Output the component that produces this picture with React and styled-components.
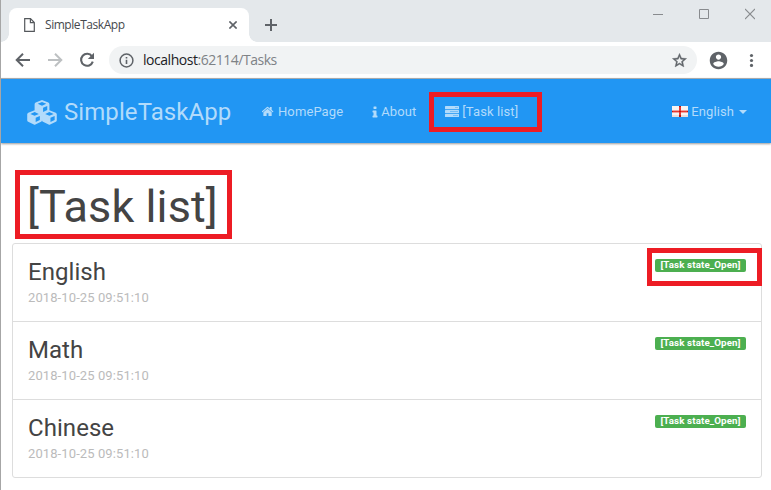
import React from 'react';
import styled, { createGlobalStyle } from 'styled-components';

const Global = createGlobalStyle`
  * { box-sizing: border-box; }
  body { margin: 0; background: #fff; font-family: Roboto, "Liberation Sans", sans-serif; }
`;

const Window = styled.div`
  width: 771px;
  height: 490px;
  overflow: hidden;
  background: #fff;
  border-left: 1px solid #a6a6a6;
`;

const TabStrip = styled.div`
  height: 42px;
  padding: 8px 0 0 8px;
  display: flex;
  background: #e4e8eb;
`;

const Tab = styled.div`
  position: relative;
  width: 240px;
  height: 34px;
  padding: 0 12px 0 15px;
  display: flex;
  align-items: center;
  background: #fff;
  border-radius: 8px 8px 0 0;
  &::before, &::after {
    content: "";
    position: absolute;
    bottom: 0;
    width: 8px;
    height: 8px;
  }
  &::before { left: -8px; background: radial-gradient(circle at 0 0, transparent 7.5px, #fff 8px); }
  &::after { right: -8px; background: radial-gradient(circle at 100% 0, transparent 7.5px, #fff 8px); }
`;

const TabTitle = styled.span`
  flex: 1;
  margin-left: 10px;
  font: 12px/16px "Open Sans", sans-serif;
  letter-spacing: -0.45px;
  color: #45494d;
`;

const NewTab = styled.div`
  width: 12px;
  height: 12px;
  margin: 11px 0 0 16px;
  display: flex;
`;

const WindowButtons = styled.div`
  margin: 0 16px 0 auto;
  display: flex;
  gap: 36px;
  height: 12px;
`;

const Toolbar = styled.div`
  height: 36px;
  display: flex;
  align-items: center;
  padding: 0 12px 0 14px;
`;

const NavButtons = styled.div`
  width: 94px;
  display: flex;
  gap: 16px;
`;

const AddressBar = styled.div`
  width: 588px;
  height: 28px;
  padding: 0 9px 0 10px;
  border-radius: 14px;
  display: flex;
  align-items: center;
  background: #f1f3f4;
`;

const Url = styled.span`
  flex: 1;
  margin-left: 9px;
  font: 14px/20px "Open Sans", sans-serif;
  letter-spacing: -0.47px;
  color: #7e8286;
  b { font-weight: 400; color: #202124; }
`;

const ToolbarEnd = styled.div`
  flex: 1;
  display: flex;
  justify-content: space-between;
  align-items: center;
  margin-left: 11px;
`;

const Navbar = styled.nav`
  height: 65px;
  border-top: 1px solid #a5a9ad;
  display: flex;
  align-items: center;
  padding: 1px 24px 0 26px;
  background: #2196f3;
  color: #b2dbfb;
  box-shadow: 0 1px 2px rgba(0, 0, 0, 0.4);
`;

const Brand = styled.div`
  display: flex;
  align-items: center;
  width: 235px;
  gap: 7px;
  font-size: 24px;
  line-height: 30px;
  letter-spacing: 0.08px;
  padding-top: 1px;
`;

const NavItem = styled.div`
  position: relative;
  display: flex;
  align-items: center;
  gap: ${p => p.$gap || 3}px;
  margin-right: ${p => p.$end ? 0 : 29}px;
  margin-left: ${p => p.$end ? 'auto' : 0};
  font-size: 13px;
  line-height: 18px;
  letter-spacing: 0.1px;
`;

const Highlight = styled.span`
  position: absolute;
  top: ${p => p.$top}px;
  left: ${p => p.$left}px;
  width: ${p => p.$width}px;
  height: ${p => p.$height}px;
  border: 5px solid #ed1c24;
`;

const Caret = styled.span`
  margin-left: 2px;
  border: 4px solid transparent;
  border-top-color: currentColor;
  border-bottom: 0;
`;

const Main = styled.main`
  padding: 0 9px 0 11px;
  color: #444;
`;

const Heading = styled.h1`
  position: relative;
  height: 100px;
  margin: 0;
  padding: 37px 0 0 15px;
  font-size: 45px;
  line-height: 54px;
  letter-spacing: 0.1px;
  font-weight: 400;
`;

const TaskList = styled.ul`
  list-style: none;
  margin: 0;
  padding: 0;
  border: 1px solid #ddd;
  border-radius: 3px;
`;

const Task = styled.li`
  height: 78px;
  padding: 15px 15px 0;
  display: flex;
  justify-content: space-between;
  align-items: flex-start;
  & + & { border-top: 1px solid #ddd; }
  &:first-child { height: 77px; }
`;

const TaskName = styled.h4`
  margin: 0;
  font-size: 24px;
  line-height: 26px;
  letter-spacing: 0.05px;
  font-weight: 400;
`;

const TaskTime = styled.div`
  margin-top: 5px;
  font-size: 13px;
  line-height: 15px;
  letter-spacing: 0.1px;
  color: #bbb;
`;

const StateHolder = styled.div`
  position: relative;
`;

const State = styled.div`
  width: 91px;
  height: 13px;
  border-radius: 2px;
  background: #4caf50;
  color: #fff;
  text-align: center;
  font-size: 9.75px;
  line-height: 12px;
  letter-spacing: 0.12px;
  font-weight: 700;
  white-space: nowrap;
`;

const FaIcon = ({ width, height = 13, box, d }) => (
  <svg width={width} height={height} viewBox={box} fill="currentColor"><path d={d} /></svg>
);

const HOME = 'M1408 992v480q0 26-19 45t-45 19h-384v-384h-256v384h-384q-26 0-45-19t-19-45v-480q0-1 .5-3t.5-3l575-474 575 474q1 2 1 6zm223-69l-62 74q-8 9-21 11h-3q-13 0-21-7l-692-577-692 577q-12 8-24 7-13-2-21-11l-62-74q-8-10-7-23.5t11-21.5l719-599q32-26 76-26t76 26l244 204v-195q0-14 9-23t23-9h192q14 0 23 9t9 23v408l219 182q10 8 11 21.5t-7 23.5z';
const INFO = 'M1216 1344v128q0 26-19 45t-45 19h-512q-26 0-45-19t-19-45v-128q0-26 19-45t45-19h64v-384h-64q-26 0-45-19t-19-45v-128q0-26 19-45t45-19h384q26 0 45 19t19 45v576h64q26 0 45 19t19 45zm-128-1152v192q0 26-19 45t-45 19h-256q-26 0-45-19t-19-45v-192q0-26 19-45t45-19h256q26 0 45 19t19 45z';

const CUBE = 'M8 .1L14.5 2.6Q15.6 3.1 15.6 4.3V10.4Q15.6 11.5 14.6 12L8.8 14.8Q8 15.2 7.2 14.8L1.4 12Q.4 11.5 .4 10.4V4.3Q.4 3.1 1.5 2.6ZM8 2L3.6 3.9 8 5.8 12.4 3.9ZM9.1 7.9V12.3L13.4 10.2V6.1Z';

const Cubes = () => (
  <svg width="30" height="25" viewBox="0.5 0 30.8 25.7" fill="currentColor" fillRule="evenodd">
    <path transform="translate(7.9 0)" d={CUBE} />
    <path transform="translate(.3 10.4)" d={CUBE} />
    <path transform="translate(15.5 10.4)" d={CUBE} />
  </svg>
);

const TaskBars = () => (
  <svg width="14" height="11" viewBox="0 0 14 11" fill="currentColor">
    <rect y="0" width="14" height="3.2" rx=".5" />
    <rect y="3.9" width="14" height="3.2" rx=".5" />
    <rect y="7.8" width="14" height="3.2" rx=".5" />
    <path d="M10 1.1h3v1h-3zM5 5h8v1H5zM8 8.900h5v1H8z" fill="#2196f3" fillOpacity=".4" />
  </svg>
);

const Flag = () => (
  <svg width="16" height="11" viewBox="0 0 16 11">
    <path fill="#f7f3f2" d="M0 0h16v11H0z" />
    <path fill="#e9dcda" d="M0 9h16v2H0z" />
    <path fill="#e9372f" d="M7 0h2v11H7zM0 5h16v1H0z" />
    <path fill="#ba1512" d="M7 0h2v1H7zM7 9h2v2H7zM0 5h1v1H0zM15 5h1v1h-1zM7 5h2v1H7z" />
    <path fill="#efa39e" d="M0 4h7v1H0zM9 4h7v1H9zM0 6h7v1H0zM9 6h7v1H9z" />
  </svg>
);

const Avatar = () => (
  <svg width="21" height="21" viewBox="0 0 24 24" fill="#5f6368">
    <path d="M12 2C6.5 2 2 6.5 2 12s4.5 10 10 10 10-4.5 10-10S17.5 2 12 2zm0 3c1.7 0 3 1.3 3 3s-1.3 3-3 3-3-1.3-3-3 1.3-3 3-3zm0 14.2c-2.5 0-4.7-1.3-6-3.2 0-2 4-3.1 6-3.1s6 1.1 6 3.1c-1.3 1.9-3.5 3.2-6 3.2z" />
  </svg>
);

const Star = () => (
  <svg width="17" height="17" viewBox="0 0 24 24" fill="#5f6368" stroke="#5f6368" strokeWidth=".6">
    <path d="M22 9.2l-7.2-.6L12 2 9.2 8.6 2 9.2l5.5 4.7L5.8 21l6.2-3.7 6.2 3.7-1.6-7.1L22 9.2zM12 15.4l-3.8 2.3 1-4.3-3.3-2.9 4.4-.4L12 6.1l1.7 4 4.4.4-3.3 2.9 1 4.3L12 15.4z" />
  </svg>
);

const tasks = ['English', 'Math', 'Chinese'];

export default function App() {
  return (
    <Window>
      <Global />
      <TabStrip>
        <Tab>
          <svg width="11" height="14" viewBox="0 0 11 14" fill="none" stroke="#54585c" strokeWidth="1.2">
            <path d="M.7.7H6.5L10.3 4.5V13.3H.7ZM6.4.8V4.7H10.2" />
          </svg>
          <TabTitle>SimpleTaskApp</TabTitle>
          <svg width="8" height="8" viewBox="0 0 8 8" stroke="#5f6368" strokeWidth="1.6"><path d="M.4.4L7.6 7.6M7.6.4L.4 7.6" /></svg>
        </Tab>
        <NewTab>
          <svg width="12" height="12" viewBox="0 0 12 12" fill="#5f6368"><path d="M5 0h2v5h5v2H7v5H5V7H0V5h5z" /></svg>
        </NewTab>
        <WindowButtons>
          <svg width="10" height="12" viewBox="0 0 10 12"><path d="M0 6.5h10" stroke="#888b8e" /></svg>
          <svg width="10" height="12" viewBox="0 0 10 12"><path d="M.5 1.5h9v9h-9z" fill="none" stroke="#888b8e" /></svg>
          <svg width="10" height="12" viewBox="0 0 10 12"><path d="M0 1l10 10M10 1L0 11" stroke="#888b8e" strokeWidth="1.1" /></svg>
        </WindowButtons>
      </TabStrip>
      <Toolbar>
        <NavButtons>
          <svg width="16" height="16" viewBox="0 0 16 16" fill="none" stroke="#5f6368" strokeWidth="2"><path d="M15 8H2.5M8 1.7L1.7 8L8 14.3" /></svg>
          <svg width="16" height="16" viewBox="0 0 16 16" fill="none" stroke="#bdc0c2" strokeWidth="2"><path d="M1 8h12.5M8 1.7L14.3 8L8 14.3" /></svg>
          <svg width="16" height="16" viewBox="0 0 16 16"><path d="M13 4.3A6 6 0 1 0 13.8 9.7" fill="none" stroke="#5f6368" strokeWidth="2.1" /><path d="M15 .8V7H8.8z" fill="#5f6368" /></svg>
        </NavButtons>
        <AddressBar>
          <svg width="15" height="15" viewBox="0 0 15 15" fill="none" stroke="#5f6368"><circle cx="7.5" cy="7.5" r="6.4" strokeWidth="1.5" /><path d="M7.5 6.7V11M7.5 4V5.5" strokeWidth="1.6" /></svg>
          <Url><b>localhost</b>:62114/Tasks</Url>
          <Star />
        </AddressBar>
        <ToolbarEnd>
          <Avatar />
          <svg width="14" height="14" viewBox="0 0 14 14" fill="#5f6368"><circle cx="6.5" cy="2.5" r="1.6" /><circle cx="6.5" cy="7.5" r="1.6" /><circle cx="6.5" cy="12.4" r="1.6" /></svg>
        </ToolbarEnd>
      </Toolbar>
      <Navbar>
        <Brand><Cubes />SimpleTaskApp</Brand>
        <NavItem $gap={4}><FaIcon width={12} box="64 128 1664 1536" d={HOME} />HomePage</NavItem>
        <NavItem><FaIcon width={6} height={12} box="576 64 640 1536" d={INFO} />About</NavItem>
        <NavItem>
          <TaskBars />[Task list]
          <Highlight $top={-11} $left={-16} $width={113} $height={40} />
        </NavItem>
        <NavItem $end><Flag />English <Caret /></NavItem>
      </Navbar>
      <Main>
        <Heading>
          [Task list]
          <Highlight $top={27} $left={3} $width={217} $height={69} />
        </Heading>
        <TaskList>
          {tasks.map((name, i) => (
            <Task key={name}>
              <div>
                <TaskName>{name}</TaskName>
                <TaskTime>2018-10-25 09:51:10</TaskTime>
              </div>
              <StateHolder>
                <State>[Task state_Open]</State>
                {i === 0 && <Highlight $top={-11} $left={-8} $width={115} $height={38} />}
              </StateHolder>
            </Task>
          ))}
        </TaskList>
      </Main>
    </Window>
  );
}
